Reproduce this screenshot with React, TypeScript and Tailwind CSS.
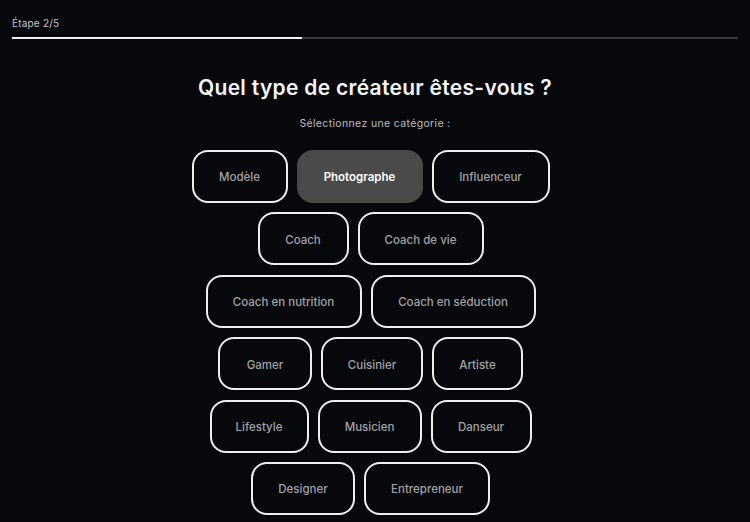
import React, { useState } from "react";

type Category = { label: string; w: string };

const categories: Category[] = [
  { label: "Modèle", w: "w-[96px]" },
  { label: "Photographe", w: "w-[126px]" },
  { label: "Influenceur", w: "w-[118px]" },
  { label: "Coach", w: "w-[91px]" },
  { label: "Coach de vie", w: "w-[126px]" },
  { label: "Coach en nutrition", w: "w-[156px]" },
  { label: "Coach en séduction", w: "w-[165px]" },
  { label: "Gamer", w: "w-[94px]" },
  { label: "Cuisinier", w: "w-[102px]" },
  { label: "Artiste", w: "w-[91px]" },
  { label: "Lifestyle", w: "w-[99px]" },
  { label: "Musicien", w: "w-[104px]" },
  { label: "Danseur", w: "w-[101px]" },
  { label: "Designer", w: "w-[104px]" },
  { label: "Entrepreneur", w: "w-[126px]" },
];

export default function App() {
  const [selected, setSelected] = useState("Photographe");
  const step = 2;
  const total = 5;

  return (
    <div
      className="min-h-[522px] bg-[#06080c] px-3 pt-4 text-white"
      style={{ fontFamily: "Inter, 'Noto Sans', sans-serif" }}
    >
      <div className="text-[10px] leading-[14px] tracking-[0.2px] text-[#c4c4c6]">
        Étape {step}/{total}
      </div>
      <div className="mt-[7px] h-[2px] w-full bg-[#37383b]">
        <div className="h-full bg-[#f2f2f2]" style={{ width: `${(step / total) * 100}%` }} />
      </div>

      <h1 className="mt-[36px] text-center text-[21px] font-semibold leading-[25px] tracking-[0.3px] text-[#f4f4f4]">
        Quel type de créateur êtes-vous ?
      </h1>
      <p className="mt-[16px] text-center text-[10.5px] leading-[15px] tracking-[0.35px] text-[#bdbdbf]">
        Sélectionnez une catégorie :
      </p>

      <div className="mx-auto mt-[19px] flex max-w-sm flex-wrap justify-center gap-y-[9.4px]">
        {categories.map((c) => {
          const active = c.label === selected;
          return (
            <button
              key={c.label}
              onClick={() => setSelected(c.label)}
              className={
                active
                  ? `${c.w} mr-[9px] flex h-[53px] items-center justify-center rounded-2xl border-2 border-[#4a4a4b] bg-[#4a4a4b] pt-[3px] text-[11.5px] font-semibold text-white`
                  : `${c.w} mr-[9px] flex h-[53px] items-center justify-center rounded-2xl border-2 border-[#eeeeee] bg-transparent pt-[3px] text-[11.5px] font-medium text-[#a3a3a5]`
              }
            >
              {c.label}
            </button>
          );
        })}
      </div>
    </div>
  );
}
